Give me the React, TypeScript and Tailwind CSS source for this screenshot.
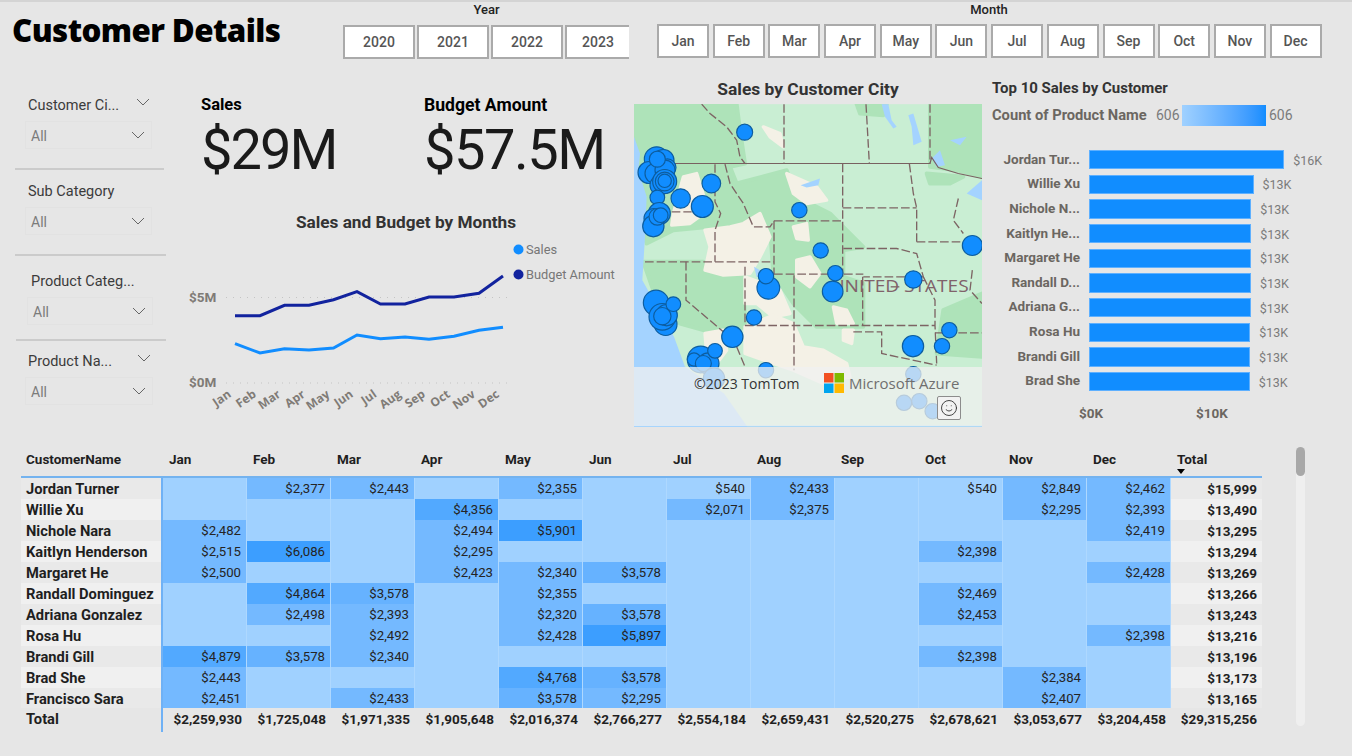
import React from 'react'
import { Smile } from 'lucide-react'

const MONTHS = ['Jan', 'Feb', 'Mar', 'Apr', 'May', 'Jun', 'Jul', 'Aug', 'Sep', 'Oct', 'Nov', 'Dec']
const MONTH_TICKS = [235, 260, 284.5, 309, 333.5, 357, 380.5, 405, 429, 454, 479, 503]
const BUDGET_Y = [315.7, 315.7, 305.3, 305.3, 299.7, 291.7, 304, 304, 297, 297, 293.3, 276]
const SALES_Y = [343.7, 353, 348.7, 350, 348, 335, 338.7, 337, 339.3, 336.3, 330.3, 327.3]

const points = (ys: number[]) => ys.map((y, i) => `${MONTH_TICKS[i]},${y}`).join(' ')

const TOP_CUSTOMERS = [
  { name: 'Jordan Tur...', width: 195.3, value: '$16K' },
  { name: 'Willie Xu', width: 164.5, value: '$13K' },
  { name: 'Nichole N...', width: 162.3, value: '$13K' },
  { name: 'Kaitlyn He...', width: 162.3, value: '$13K' },
  { name: 'Margaret He', width: 162, value: '$13K' },
  { name: 'Randall D...', width: 162, value: '$13K' },
  { name: 'Adriana G...', width: 161.7, value: '$13K' },
  { name: 'Rosa Hu', width: 161.3, value: '$13K' },
  { name: 'Brandi Gill', width: 161, value: '$13K' },
  { name: 'Brad She', width: 160.7, value: '$13K' },
]

const ROWS: { name: string; total: string; cells: Record<string, number> }[] = [
  { name: 'Jordan Turner', total: '$15,999', cells: { Feb: 2377, Mar: 2443, May: 2355, Jul: 540, Aug: 2433, Oct: 540, Nov: 2849, Dec: 2462 } },
  { name: 'Willie Xu', total: '$13,490', cells: { Apr: 4356, Jul: 2071, Aug: 2375, Nov: 2295, Dec: 2393 } },
  { name: 'Nichole Nara', total: '$13,295', cells: { Jan: 2482, Apr: 2494, May: 5901, Dec: 2419 } },
  { name: 'Kaitlyn Henderson', total: '$13,294', cells: { Jan: 2515, Feb: 6086, Apr: 2295, Oct: 2398 } },
  { name: 'Margaret He', total: '$13,269', cells: { Jan: 2500, Apr: 2423, May: 2340, Jun: 3578, Dec: 2428 } },
  { name: 'Randall Dominguez', total: '$13,266', cells: { Feb: 4864, Mar: 3578, May: 2355, Oct: 2469 } },
  { name: 'Adriana Gonzalez', total: '$13,243', cells: { Feb: 2498, Mar: 2393, May: 2320, Jun: 3578, Oct: 2453 } },
  { name: 'Rosa Hu', total: '$13,216', cells: { Mar: 2492, May: 2428, Jun: 5897, Dec: 2398 } },
  { name: 'Brandi Gill', total: '$13,196', cells: { Jan: 4879, Feb: 3578, Mar: 2340, Oct: 2398 } },
  { name: 'Brad She', total: '$13,173', cells: { Jan: 2443, May: 4768, Jun: 3578, Nov: 2384 } },
  { name: 'Francisco Sara', total: '$13,165', cells: { Jan: 2451, Mar: 2433, May: 3578, Jun: 2295, Nov: 2407 } },
]

const TOTALS = ['$2,259,930', '$1,725,048', '$1,971,335', '$1,905,648', '$2,016,374', '$2,766,277', '$2,554,184', '$2,659,431', '$2,520,275', '$2,678,621', '$3,053,677', '$3,204,458']

const BUBBLES = [
  [344, 186, 24], [80, 267, 37], [100, 270, 32], [112, 292, 26], [57, 307, 33], [75, 310, 30], [105, 300, 30], [90, 345, 30],
  [104, 334, 36], [104, 334, 28], [104, 332, 20], [82, 382, 22], [82, 267, 24], [152, 385, 29], [244, 340, 28], [217, 409, 33],
  [88, 430, 33], [72, 445, 30], [70, 468, 32], [82, 440, 25], [92, 435, 22], [508, 420, 23], [1027, 526, 30], [572, 541, 23],
  [415, 653, 34], [408, 618, 23], [608, 664, 31], [616, 609, 23], [850, 628, 26], [78, 698, 38], [107, 762, 34], [97, 740, 40],
  [110, 735, 32], [97, 738, 26], [130, 702, 22], [372, 742, 23], [307, 800, 32], [958, 780, 23], [936, 828, 23], [849, 828, 32],
  [212, 868, 40], [192, 868, 20], [235, 880, 32], [220, 880, 24], [255, 842, 22], [252, 925, 32], [408, 900, 23], [850, 912, 23],
  [822, 998, 23], [868, 993, 23], [908, 1023, 23],
]

const BORDERS = [
  'M215,102 L240,130 290,170 320,210 330,260 345,280',
  'M462,102 V280', 'M708,102 L718,280', 'M900,102 V280',
  'M255,282 V395 L272,430 L255,480 V575',
  'M285,282 L300,340 340,400 370,470 420,470 432,452',
  'M432,452 H638', 'M638,280 V620', 'M432,452 V612', 'M45,575 H432',
  'M168,575 V690 L310,810', 'M345,590 V766 M345,766 H915', 'M432,612 H700', 'M492,615 V900',
  'M638,413 H860', 'M860,515 V413 L850,370 838,280', 'M640,535 H800 L860,550 880,620 H700 M698,620 V766',
  'M860,515 H1027', 'M880,620 L915,690 V766 L920,880', 'M670,785 H755 V850 L920,885', 'M915,788 H1056',
  'M125,425 H185', 'M1027,600 L1020,660 1056,700', 'M985,385 L970,450 1000,490', 'M320,830 L345,890', 'M782,650 H814',
]

const cellColor = (v?: number) => {
  if (!v || v < 1000) return 'bg-[#a0d1ff]'
  if (v < 3000) return 'bg-[#74b9ff]'
  if (v < 4000) return 'bg-[#66b2ff]'
  if (v < 5000) return 'bg-[#52a9ff]'
  return 'bg-[#3c9eff]'
}

const Chevron = () => (
  <svg width="14" height="8" viewBox="0 0 14 8" fill="none" stroke="#666666" strokeWidth="1">
    <path d="M1 1l6 6 6-6" />
  </svg>
)

const Slicer = ({ label, wrap, labelPad, chevron = true }: { label: string; wrap: string; labelPad: string; chevron?: boolean }) => (
  <div className={wrap}>
    <div className={`flex h-5 items-center justify-between pr-[2px] text-[14.5px] text-[#3b3b3b] ${labelPad}`}>
      <span className="pt-[3px]">{label}</span>
      {chevron && (
        <span className="-mt-1">
          <Chevron />
        </span>
      )}
    </div>
    <div className="mt-[7px] flex h-[28px] items-center justify-between border border-[#e2e2e2] pl-[5px] pr-[6px] text-[14px] text-[#7b7b7b]">
      <span className="pt-[3px]">All</span>
      <Chevron />
    </div>
  </div>
)

const Divider = ({ wrap }: { wrap: string }) => <div className={`h-[2px] bg-[#cbcbcb] ${wrap}`} />

const MapVisual = () => (
  <svg viewBox="12 102 1044 968" className="block h-full w-full">
    <rect x="12" y="102" width="1044" height="968" fill="#c9eed3" />
    <g fill="#aee3b9" stroke="#aee3b9" strokeWidth="12" strokeLinejoin="round">
      <polygon points="12,102 320,102 330,180 345,280 300,290 320,340 470,300 500,380 600,430 640,470 700,530 640,540 640,620 700,640 700,770 560,770 490,700 430,610 420,470 300,560 240,470 130,480 50,520 12,400" />
      <polygon points="40,575 220,575 340,620 345,770 280,790 220,780 150,760 80,690" />
      <polygon points="900,102 1056,102 1056,320 980,300 900,290" />
      <polygon points="680,102 770,102 760,135 690,130" />
      <polygon points="940,720 1056,670 1056,860 920,850" />
      <polygon points="890,310 1000,320 960,340 900,340" />
    </g>
    <g fill="#f4f1e6" stroke="#f4f1e6" strokeWidth="10" strokeLinejoin="round">
      <polygon points="340,460 390,430 420,500 390,560 360,610 280,615 225,600 240,530 225,480 300,470" />
      <polygon points="160,320 200,310 235,420 180,460 125,465 130,430" />
      <polygon points="470,310 560,350 590,390 530,400 490,370" />
      <polygon points="490,470 530,460 535,510 500,505" />
      <polygon points="500,570 540,560 570,610 540,650 500,620" />
      <polygon points="345,620 400,640 450,660 480,730 430,740 380,700 345,700" />
      <polygon points="345,770 430,735 490,760 520,830 580,840 650,880 660,920 580,940 490,900 430,880 345,850" />
      <polygon points="610,710 650,720 670,760 620,760" />
      <polygon points="225,790 280,780 290,840 260,880 230,850" />
      <polygon points="400,170 450,190 460,230 420,200" />
      <polygon points="640,780 670,780 665,820 640,810" />
    </g>
    <polygon points="12,200 30,250 25,300 50,380 45,500 37,630 132,800 165,890 282,970 352,1070 12,1070" fill="#a4d3ff" />
    <g fill="#a4d3ff">
      <polygon points="755,102 775,102 785,150 800,170 790,175 765,140" />
      <polygon points="835,135 850,130 875,215 850,225 845,170" />
      <polygon points="960,210 1010,200 990,225" />
      <polygon points="905,265 930,240 945,285 920,290" />
      <polygon points="512,345 570,325 565,345 530,352" />
      <polygon points="1010,370 1056,330 1056,390" />
      <polygon points="372,590 390,600 395,625 380,620" />
    </g>
    <path d="M130,280 H900 L905,262 925,292 985,310 1056,325" fill="none" stroke="#786060" strokeWidth="3.5" />
    <g fill="none" stroke="#7d6464" strokeWidth="4" strokeDasharray="26 9">
      {BORDERS.map((d) => (
        <path key={d} d={d} />
      ))}
    </g>
    <text x="602" y="666" fontFamily="Open Sans, sans-serif" fontSize="50" fontWeight="500" textLength="414" lengthAdjust="spacingAndGlyphs" fill="#80626a">
      UNITED STATES
    </text>
    <g fill="#118dff" stroke="#0d5d9f" strokeWidth="3.5">
      {BUBBLES.map(([cx, cy, r]) => (
        <circle key={`${cx}-${cy}-${r}`} cx={cx} cy={cy} r={r} />
      ))}
    </g>
    <line x1="12" x2="1056" y1="1068" y2="1068" stroke="#a4d3ff" strokeWidth="4" />
  </svg>
)

const MonthlyChart = () => (
  <svg viewBox="166 235 464 185" className="mt-[1px] block h-[185px] w-[464px]">
    <g stroke="#c4c4c4" strokeWidth="1" strokeDasharray="1 6">
      <line x1="226" x2="510" y1="297.5" y2="297.5" />
      <line x1="226" x2="510" y1="383" y2="383" />
    </g>
    <g fontFamily="Roboto, sans-serif" fontWeight="700" fontSize="13.5" fill="#7f7b76">
      <text x="189" y="302">$5M</text>
      <text x="189" y="387">$0M</text>
    </g>
    <polyline points={points(BUDGET_Y)} fill="none" stroke="#12239e" strokeWidth="3" />
    <polyline points={points(SALES_Y)} fill="none" stroke="#118dff" strokeWidth="3" />
    <g fontFamily="Open Sans, sans-serif" fontWeight="700" fontSize="12" fill="#7f7b76">
      {MONTHS.map((m, i) => (
        <text key={m} textAnchor="end" transform={`translate(${MONTH_TICKS[i] - 3} 396) rotate(-35)`}>
          {m}
        </text>
      ))}
    </g>
    <circle cx="518.5" cy="249.5" r="5" fill="#118dff" />
    <circle cx="518.5" cy="274.5" r="5" fill="#12239e" />
    <g fontFamily="Roboto, sans-serif" fontSize="12.8" fill="#777777">
      <text x="526" y="253.5">Sales</text>
      <text x="526" y="278.5">Budget Amount</text>
    </g>
  </svg>
)

const App = () => {
  return (
    <div className="flex h-[756px] w-[1352px] flex-col overflow-hidden bg-[#e6e6e6] font-['Roboto',sans-serif]">
      <div className="h-[2px] bg-[#d4d4d4]" />

      {/* Title and year / month slicers */}
      <header className="flex h-[68px]">
        <h1 className="ml-[12px] mt-[6px] w-[331px] font-['Open_Sans',sans-serif] text-[31.3px] font-extrabold leading-[44px] tracking-[-0.6px] text-black">
          Customer Details
        </h1>
        <div className="w-[287px]">
          <div className="h-[16px] text-center text-[13px] font-medium leading-[16px] text-[#222222]">Year</div>
          <div className="mt-[7px] flex gap-[2px]">
            {['2020', '2021', '2022', '2023'].map((y, i) => (
              <div
                key={y}
                className={`flex h-[34px] items-center justify-center border-2 border-[#aaaaaa] bg-white text-[14px] font-medium text-[#555555] ${i === 3 ? 'w-[64px] border-r-0' : 'w-[72px]'}`}
              >
                {y}
              </div>
            ))}
          </div>
        </div>
        <div className="ml-[27px] w-[666px]">
          <div className="h-[16px] pr-[2px] text-center text-[13px] font-medium leading-[16px] text-[#222222]">Month</div>
          <div className="mt-[6px] flex gap-[3.7px]">
            {MONTHS.map((m) => (
              <div key={m} className="flex h-[34px] w-[52px] items-center justify-center border-2 border-[#aaaaaa] bg-white text-[14px] font-medium text-[#555555]">
                {m}
              </div>
            ))}
          </div>
        </div>
      </header>

      <section className="flex h-[377px]">
        {/* Dropdown slicers */}
        <aside className="flex w-[166px] flex-col">
          <Slicer label="Customer Ci..." wrap="mt-[24px] ml-[25px] w-[127px]" labelPad="pl-[3px]" />
          <Divider wrap="mt-[19px] ml-[15px] w-[149px]" />
          <Slicer label="Sub Category" wrap="mt-[10px] ml-[25px] w-[127px]" labelPad="pl-[3px]" chevron={false} />
          <Divider wrap="mt-[19px] ml-[15px] w-[151px]" />
          <Slicer label="Product Categ..." wrap="mt-[14px] ml-[27px] w-[126px]" labelPad="pl-[4px]" chevron={false} />
          <Divider wrap="mt-[14px] ml-[16px] w-[150px]" />
          <Slicer label="Product Na..." wrap="mt-[9px] ml-[25px] w-[128px]" labelPad="pl-[3px]" />
        </aside>

        {/* KPIs and line chart */}
        <div className="w-[468px]">
          <div className="mt-[25px] flex">
            <div className="ml-[35px] w-[223px]">
              <div className="h-5 text-[16.5px] font-bold leading-5 text-black">Sales</div>
              <div className="mt-[5px] text-[56px] leading-[60px] tracking-[-2px] text-[#1a1a1a]">$29M</div>
            </div>
            <div>
              <div className="h-5 text-[17.6px] font-bold leading-5 text-black">Budget Amount</div>
              <div className="mt-[5px] text-[56px] leading-[60px] tracking-[-1.5px] text-[#1a1a1a]">$57.5M</div>
            </div>
          </div>
          <h2 className="mt-[30px] w-[480px] text-center text-[17.2px] font-bold leading-6 text-[#333333]">Sales and Budget by Months</h2>
          <MonthlyChart />
        </div>

        {/* Map */}
        <div className="w-[348px]">
          <h2 className="mt-[7px] h-6 text-center text-[17.4px] font-bold leading-6 text-[#333333]">Sales by Customer City</h2>
          <div className="relative mt-[3px] h-[323px] overflow-hidden">
            <MapVisual />
            <div className="absolute inset-x-0 bottom-[1px] top-[263px] bg-[#f0f0f0]/75">
              <div className="mt-[5px] flex items-center pl-[60px]">
                <span className="w-[130px] font-['Open_Sans',sans-serif] text-[14px] text-[#333333]">©2023 TomTom</span>
                <svg width="20" height="20" viewBox="0 0 20 20" className="shrink-0">
                  <rect width="9.5" height="9.5" fill="#f25022" />
                  <rect x="10.5" width="9.5" height="9.5" fill="#7fba00" />
                  <rect y="10.5" width="9.5" height="9.5" fill="#00a4ef" />
                  <rect x="10.5" y="10.5" width="9.5" height="9.5" fill="#ffb900" />
                </svg>
                <span className="ml-[5px] whitespace-nowrap font-['Open_Sans',sans-serif] text-[15px] text-[#6f6f6f]">Microsoft Azure</span>
              </div>
              <div className="absolute bottom-[6px] right-[21px] flex h-[24px] w-[24px] items-center justify-center rounded-[2px] border border-[#8c8c8c] bg-[#f2f2f2]">
                <Smile size={18} strokeWidth={1.2} color="#333333" />
              </div>
            </div>
          </div>
        </div>

        {/* Top 10 bars */}
        <div className="flex-1 pl-[10px]">
          <h2 className="mt-[6px] h-6 text-[15px] font-bold leading-6 text-[#333333]">Top 10 Sales by Customer</h2>
          <div className="mt-[4px] flex h-[22px] items-center">
            <span className="w-[164px] whitespace-nowrap text-[14.7px] font-bold text-[#6b6661]">Count of Product Name</span>
            <span className="w-[26px] text-[14px] text-[#7b7b7b]">606</span>
            <div className="h-[21px] w-[84px] bg-gradient-to-r from-[#a0d1ff] to-[#118dff]" />
            <span className="ml-[3px] text-[14px] text-[#7b7b7b]">606</span>
          </div>
          <div className="mt-[24px] flex flex-col gap-[5.33px]">
            {TOP_CUSTOMERS.map((c) => (
              <div key={c.name} className="flex h-[19.33px] items-center">
                <span className="w-[88px] shrink-0 pb-[2px] text-right text-[13.5px] font-bold text-[#6b6661]">{c.name}</span>
                <span className="ml-[9px] h-full border border-[#5eb0ff] bg-[#118dff]" style={{ width: c.width }} />
                <span className="ml-[9px] mt-[3px] text-[12.5px] text-[#7b7b7b]">{c.value}</span>
              </div>
            ))}
          </div>
          <div className="mt-[12px] flex text-[13.5px] font-bold text-[#6b6661]">
            <span className="ml-[87px] w-[100px]">$0K</span>
            <span className="ml-[17px]">$10K</span>
          </div>
        </div>
      </section>

      {/* Matrix */}
      <section className="flex pl-[21px]">
        <div className="w-[1241px]">
          <div className="grid grid-cols-[142px_repeat(12,84px)_91px] border-b-2 border-[#74b3ef] text-[13.5px] font-bold text-[#1f1f1f]">
            <div className="flex h-[29px] items-center pb-[5px] pl-[5px]">CustomerName</div>
            {MONTHS.map((m) => (
              <div key={m} className="flex h-[29px] items-center pb-[5px] pl-[6px]">
                {m}
              </div>
            ))}
            <div className="relative flex h-[29px] items-center pb-[5px] pl-[6px]">
              Total
              <span className="absolute left-[6px] top-[22px] h-0 w-0 border-x-[4px] border-t-[5px] border-x-transparent border-t-black" />
            </div>
          </div>
          <div className="h-[230px] overflow-hidden text-[13.2px]">
            {ROWS.map((r, i) => {
              const band = i % 2 === 0 ? 'bg-[#e9e9e9]' : 'bg-[#f0f0f0]'
              return (
                <div key={r.name} className="grid h-[21px] grid-cols-[142px_repeat(12,84px)_91px]">
                  <div className={`flex items-center border-r-2 border-[#6fb1f5] pl-[5px] text-[14.7px] font-bold text-[#1f1f1f] ${band}`}>{r.name}</div>
                  {MONTHS.map((m) => (
                    <div key={m} className={`flex items-center justify-end border-b border-r border-[#aed8ff] pr-[5px] text-[#252423] ${cellColor(r.cells[m])}`}>
                      {r.cells[m] ? `$${r.cells[m].toLocaleString('en-US')}` : ''}
                    </div>
                  ))}
                  <div className={`flex items-center justify-end pr-[5px] text-[13.5px] font-bold text-[#1f1f1f] ${band}`}>{r.total}</div>
                </div>
              )
            })}
          </div>
          <div className="grid h-[19px] grid-cols-[142px_repeat(12,84px)_91px] text-[13.5px] font-bold text-[#1f1f1f]">
            <div className="flex items-center border-r-2 border-[#6fb1f5] pb-[2px] pl-[5px] text-[14.7px]">Total</div>
            {TOTALS.map((t) => (
              <div key={t} className="flex items-center justify-end pb-[2px] pr-[5px]">
                {t}
              </div>
            ))}
            <div className="flex items-center justify-end pb-[2px] pr-[5px]">$29,315,256</div>
          </div>
        </div>
        <div className="ml-[34px] h-[279px] w-[9px] rounded-full bg-[#efefef]">
          <div className="h-[29px] rounded-full bg-[#a8a8a8]" />
        </div>
      </section>
    </div>
  )
}

export default App
